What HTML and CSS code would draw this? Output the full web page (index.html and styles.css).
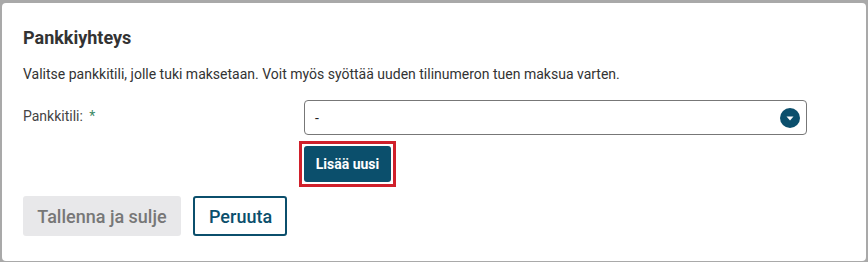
FILE: index.html
```html
<!DOCTYPE html>
<html lang="fi">
<head>
    <meta charset="UTF-8">
    <meta name="viewport" content="width=device-width, initial-scale=1.0">
    <title>Pankkiyhteys</title>
    <link rel="stylesheet" href="styles.css">
</head>
<body>
    <div class="dialog">
        <h2>Pankkiyhteys</h2>
        <p class="intro">Valitse pankkitili, jolle tuki maksetaan. Voit myös syöttää uuden tilinumeron tuen maksua varten.</p>
        <div class="form-row">
            <label for="tili">Pankkitili: <span class="req">*</span></label>
            <div class="field">
                <div class="select" id="tili">
                    <span>-</span>
                    <span class="caret">
                        <svg width="20" height="20" viewBox="0 0 20 20">
                            <circle cx="10" cy="10" r="10" fill="#0b4f6c"/>
                            <path d="M6.5 8.5 L13.5 8.5 L10 12.5 Z" fill="#fff"/>
                        </svg>
                    </span>
                </div>
                <div class="add-wrap">
                    <button class="btn-add">Lisää uusi</button>
                </div>
            </div>
        </div>
        <div class="actions">
            <button class="btn btn-disabled" disabled>Tallenna ja sulje</button>
            <button class="btn btn-outline">Peruuta</button>
        </div>
    </div>
</body>
</html>
```

FILE: styles.css
```css
body {
    margin: 0;
    padding: 3px 2px 1px 2px;
    background: #a9a9a9;
    font-family: Roboto, Arial, sans-serif;
}
.dialog {
    background: #fff;
    border-radius: 4px;
    height: 258px;
    box-sizing: border-box;
    padding: 23px 21px 0 21px;
    color: #333;
}
h2 {
    margin: 0;
    font-size: 18px;
    font-weight: 700;
    color: #333;
    line-height: 24px;
}
.intro {
    margin: 14px 0 0 0;
    font-size: 14px;
    line-height: 20px;
    color: #333;
}
.form-row {
    display: flex;
    margin-top: 16px;
}
label {
    width: 281px;
    font-size: 14px;
    color: #444;
    padding-top: 8px;
}
.req {
    color: #3d8a67;
    margin-left: 3px;
}
.field {
    flex: 1;
    max-width: 503px;
}
.select {
    height: 35px;
    border: 1px solid #777;
    border-radius: 4px;
    box-sizing: border-box;
    display: flex;
    align-items: center;
    justify-content: space-between;
    padding: 0 6px 0 10px;
    font-size: 14px;
    color: #222;
}
.caret {
    display: flex;
}
.add-wrap {
    display: inline-block;
    margin: 6px 0 0 -5px;
    border: 3px solid #d0202b;
    padding: 2px;
}
.btn-add {
    display: block;
    background: #0b4f6c;
    color: #fff;
    border: none;
    border-radius: 3px;
    font-family: Roboto, Arial, sans-serif;
    font-weight: 700;
    font-size: 14px;
    height: 36px;
    width: 87px;
    padding: 0;
}
.actions {
    display: flex;
    gap: 12px;
    margin-top: 9px;
}
.btn {
    height: 40px;
    font-family: Roboto, Arial, sans-serif;
    font-size: 18px;
    font-weight: 500;
    border-radius: 3px;
    padding: 0 14px;
    box-sizing: border-box;
}
.btn-disabled {
    background: #e8e8ea;
    color: #777;
    border: none;
    width: 158px;
}
.btn-outline {
    background: #fff;
    color: #0b4f6c;
    border: 2px solid #0b4f6c;
    width: 94px;
}
```
